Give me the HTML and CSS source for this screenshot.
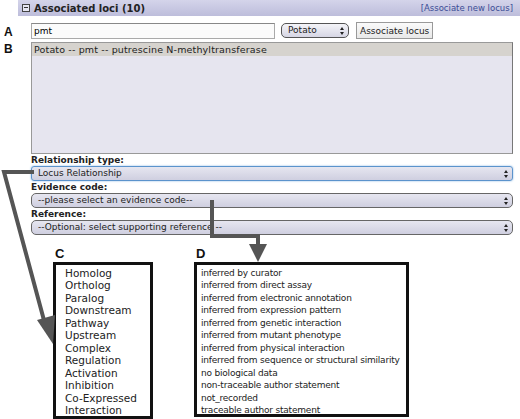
FILE: index.html
```html
<!DOCTYPE html>
<html lang="en">
<head>
    <meta charset="UTF-8">
    <title>Associated loci</title>
    <link rel="stylesheet" href="styles.css">
</head>
<body>
    <div class="page">
        <!-- Panel header -->
        <div class="panel-head">
            <span class="toggle"></span>
            <span class="panel-title">Associated loci (10)</span>
            <a href="#" class="head-link">[Associate new locus]</a>
        </div>

        <div class="row row-a">
            <span class="tag">A</span>
            <input type="text" class="text-in" value="pmt">
            <div class="pop pop-small">Potato<span class="updown"></span></div>
            <button class="btn">Associate locus</button>
        </div>

        <div class="row row-b">
            <span class="tag">B</span>
            <div class="listbox">
                <div class="opt selected">Potato -- pmt -- putrescine N-methyltransferase</div>
            </div>
        </div>

        <div class="field">
            <div class="field-label">Relationship type:</div>
            <div class="pop pop-wide focused">Locus Relationship<span class="updown"></span></div>
        </div>
        <div class="field">
            <div class="field-label">Evidence code:</div>
            <div class="pop pop-wide">--please select an evidence code--<span class="updown"></span></div>
        </div>
        <div class="field">
            <div class="field-label">Reference:</div>
            <div class="pop pop-wide">--Optional: select supporting reference --<span class="updown"></span></div>
        </div>

        <!-- Expanded option lists -->
        <div class="callouts">
            <div class="callout callout-c">
                <div class="tag big">C</div>
                <ul class="menu">
                    <li>Homolog</li>
                    <li>Ortholog</li>
                    <li>Paralog</li>
                    <li>Downstream</li>
                    <li>Pathway</li>
                    <li>Upstream</li>
                    <li>Complex</li>
                    <li>Regulation</li>
                    <li>Activation</li>
                    <li>Inhibition</li>
                    <li>Co-Expressed</li>
                    <li>Interaction</li>
                </ul>
            </div>
            <div class="callout callout-d">
                <div class="tag big">D</div>
                <ul class="menu">
                    <li>inferred by curator</li>
                    <li>inferred from direct assay</li>
                    <li>inferred from electronic annotation</li>
                    <li>inferred from expression pattern</li>
                    <li>inferred from genetic interaction</li>
                    <li>inferred from mutant phenotype</li>
                    <li>inferred from physical interaction</li>
                    <li>inferred from sequence or structural similarity</li>
                    <li>no biological data</li>
                    <li>non-traceable author statement</li>
                    <li>not_recorded</li>
                    <li>traceable author statement</li>
                </ul>
            </div>
        </div>

        <!-- Pointer arrows from the selects to their lists -->
        <svg class="arrows" width="520" height="419" viewBox="0 0 520 419">
            <g fill="none" stroke="#555" stroke-width="4" stroke-linejoin="miter">
                <polyline points="34,172 4,172 45,324"/>
                <polyline points="212,200 212,236 258,236 258,246"/>
            </g>
            <g fill="#555">
                <polygon points="37,320 55,315 53,344"/>
                <polygon points="249,244 267,244 258,262"/>
            </g>
        </svg>
    </div>
</body>
</html>
```

FILE: styles.css
```css
body {
    margin: 0;
    background: #fff;
    font-family: "DejaVu Sans", Verdana, sans-serif;
    color: #222;
}

.page {
    position: relative;
    width: 520px;
    height: 419px;
    overflow: hidden;
}

/* header bar */
.panel-head {
    margin-left: 18px;
    height: 16px;
    background: linear-gradient(#d4d4ea, #bdbddb);
    display: flex;
    align-items: center;
    font-size: 10px;
    padding: 0 7px 0 4px;
}

.toggle {
    width: 6px;
    height: 6px;
    border: 1px solid #444;
    position: relative;
    margin-right: 4px;
    background: #e6e6f2;
}

.toggle::after {
    content: "";
    position: absolute;
    left: 1px;
    right: 1px;
    top: 2px;
    height: 1px;
    background: #333;
}

.panel-title {
    font-weight: bold;
    color: #222;
}

.head-link {
    margin-left: auto;
    color: #3b4d96;
    text-decoration: none;
    font-size: 8.5px;
}

/* rows */
.row {
    display: flex;
    align-items: flex-start;
}

.tag {
    font-family: "Liberation Sans", Arial, sans-serif;
    font-weight: bold;
    font-size: 12px;
    color: #111;
    width: 31px;
    padding-left: 4px;
    box-sizing: border-box;
}

.row-a {
    margin-top: 6px;
    height: 17px;
    align-items: center;
}

.row-a .tag {
    margin-top: 2px;
}

.text-in {
    width: 244px;
    height: 16px;
    box-sizing: border-box;
    border: 1px solid #aaa;
    border-top-color: #888;
    background: #fbfbfb;
    font-family: inherit;
    font-size: 9px;
    padding: 0 2px;
    margin: 0;
}

.pop {
    position: relative;
    height: 15px;
    box-sizing: border-box;
    border: 1px solid #555;
    border-radius: 5px;
    background: linear-gradient(#f4f4f8, #d6d6e4);
    font-size: 9px;
    line-height: 13px;
    padding-left: 6px;
    color: #222;
    white-space: nowrap;
}

.updown {
    position: absolute;
    right: 4px;
    top: 3px;
    width: 0;
    height: 0;
    border-left: 2px solid transparent;
    border-right: 2px solid transparent;
    border-bottom: 3px solid #222;
}

.updown::after {
    content: "";
    position: absolute;
    left: -2px;
    top: 5px;
    border-left: 2px solid transparent;
    border-right: 2px solid transparent;
    border-top: 3px solid #222;
}

.pop-small {
    width: 68px;
    margin-left: 6px;
}

.btn {
    margin-left: 7px;
    height: 17px;
    padding: 0 3px;
    border: 1px solid #999;
    background: linear-gradient(#fafafa, #e8e8e8);
    font-family: inherit;
    font-size: 9px;
    color: #222;
}

.row-b {
    margin-top: 3px;
}

.listbox {
    width: 482px;
    height: 112px;
    box-sizing: border-box;
    border: 1px solid #999;
    border-right-color: #777;
    background: #e6e5ef;
}

.opt {
    font-size: 9.5px;
    letter-spacing: 0.15px;
    line-height: 13px;
    padding-left: 2px;
}

.opt.selected {
    background: #d6d3ce;
}

/* labelled selects */
.field {
    margin-left: 31px;
    width: 482px;
}

.field-label {
    font-weight: bold;
    font-size: 9px;
    line-height: 11px;
    margin-top: 1px;
}

.field:first-of-type .field-label {
    margin-top: 2px;
}

.pop-wide {
    height: 15px;
    background: linear-gradient(#e6e6f0, #cfcfe0);
    border-color: #666;
}

.pop.focused {
    border: 1px solid #5b93cc;
    border-radius: 3px;
    box-shadow: 0 0 2px #7fb0e0;
}

/* expanded lists */
.callouts {
    display: flex;
    gap: 41px;
    margin-top: 11px;
    margin-left: 53px;
}

.tag.big {
    font-size: 13px;
    padding-left: 2px;
    width: auto;
    height: 16px;
}

.menu {
    list-style: none;
    margin: 0;
    border: 3px solid #111;
    background: #fff;
    padding: 2px 0 0 8px;
    line-height: 12.45px;
    color: #222;
    white-space: nowrap;
    box-sizing: border-box;
}

.callout-c .menu {
    width: 100px;
    height: 157px;
    padding-left: 9px;
    font-size: 10.5px;
}

.callout-d .menu {
    width: 215px;
    height: 155px;
    padding-left: 4px;
    font-size: 9px;
    letter-spacing: -0.2px;
}

.arrows {
    position: absolute;
    left: 0;
    top: 0;
    pointer-events: none;
}
```
